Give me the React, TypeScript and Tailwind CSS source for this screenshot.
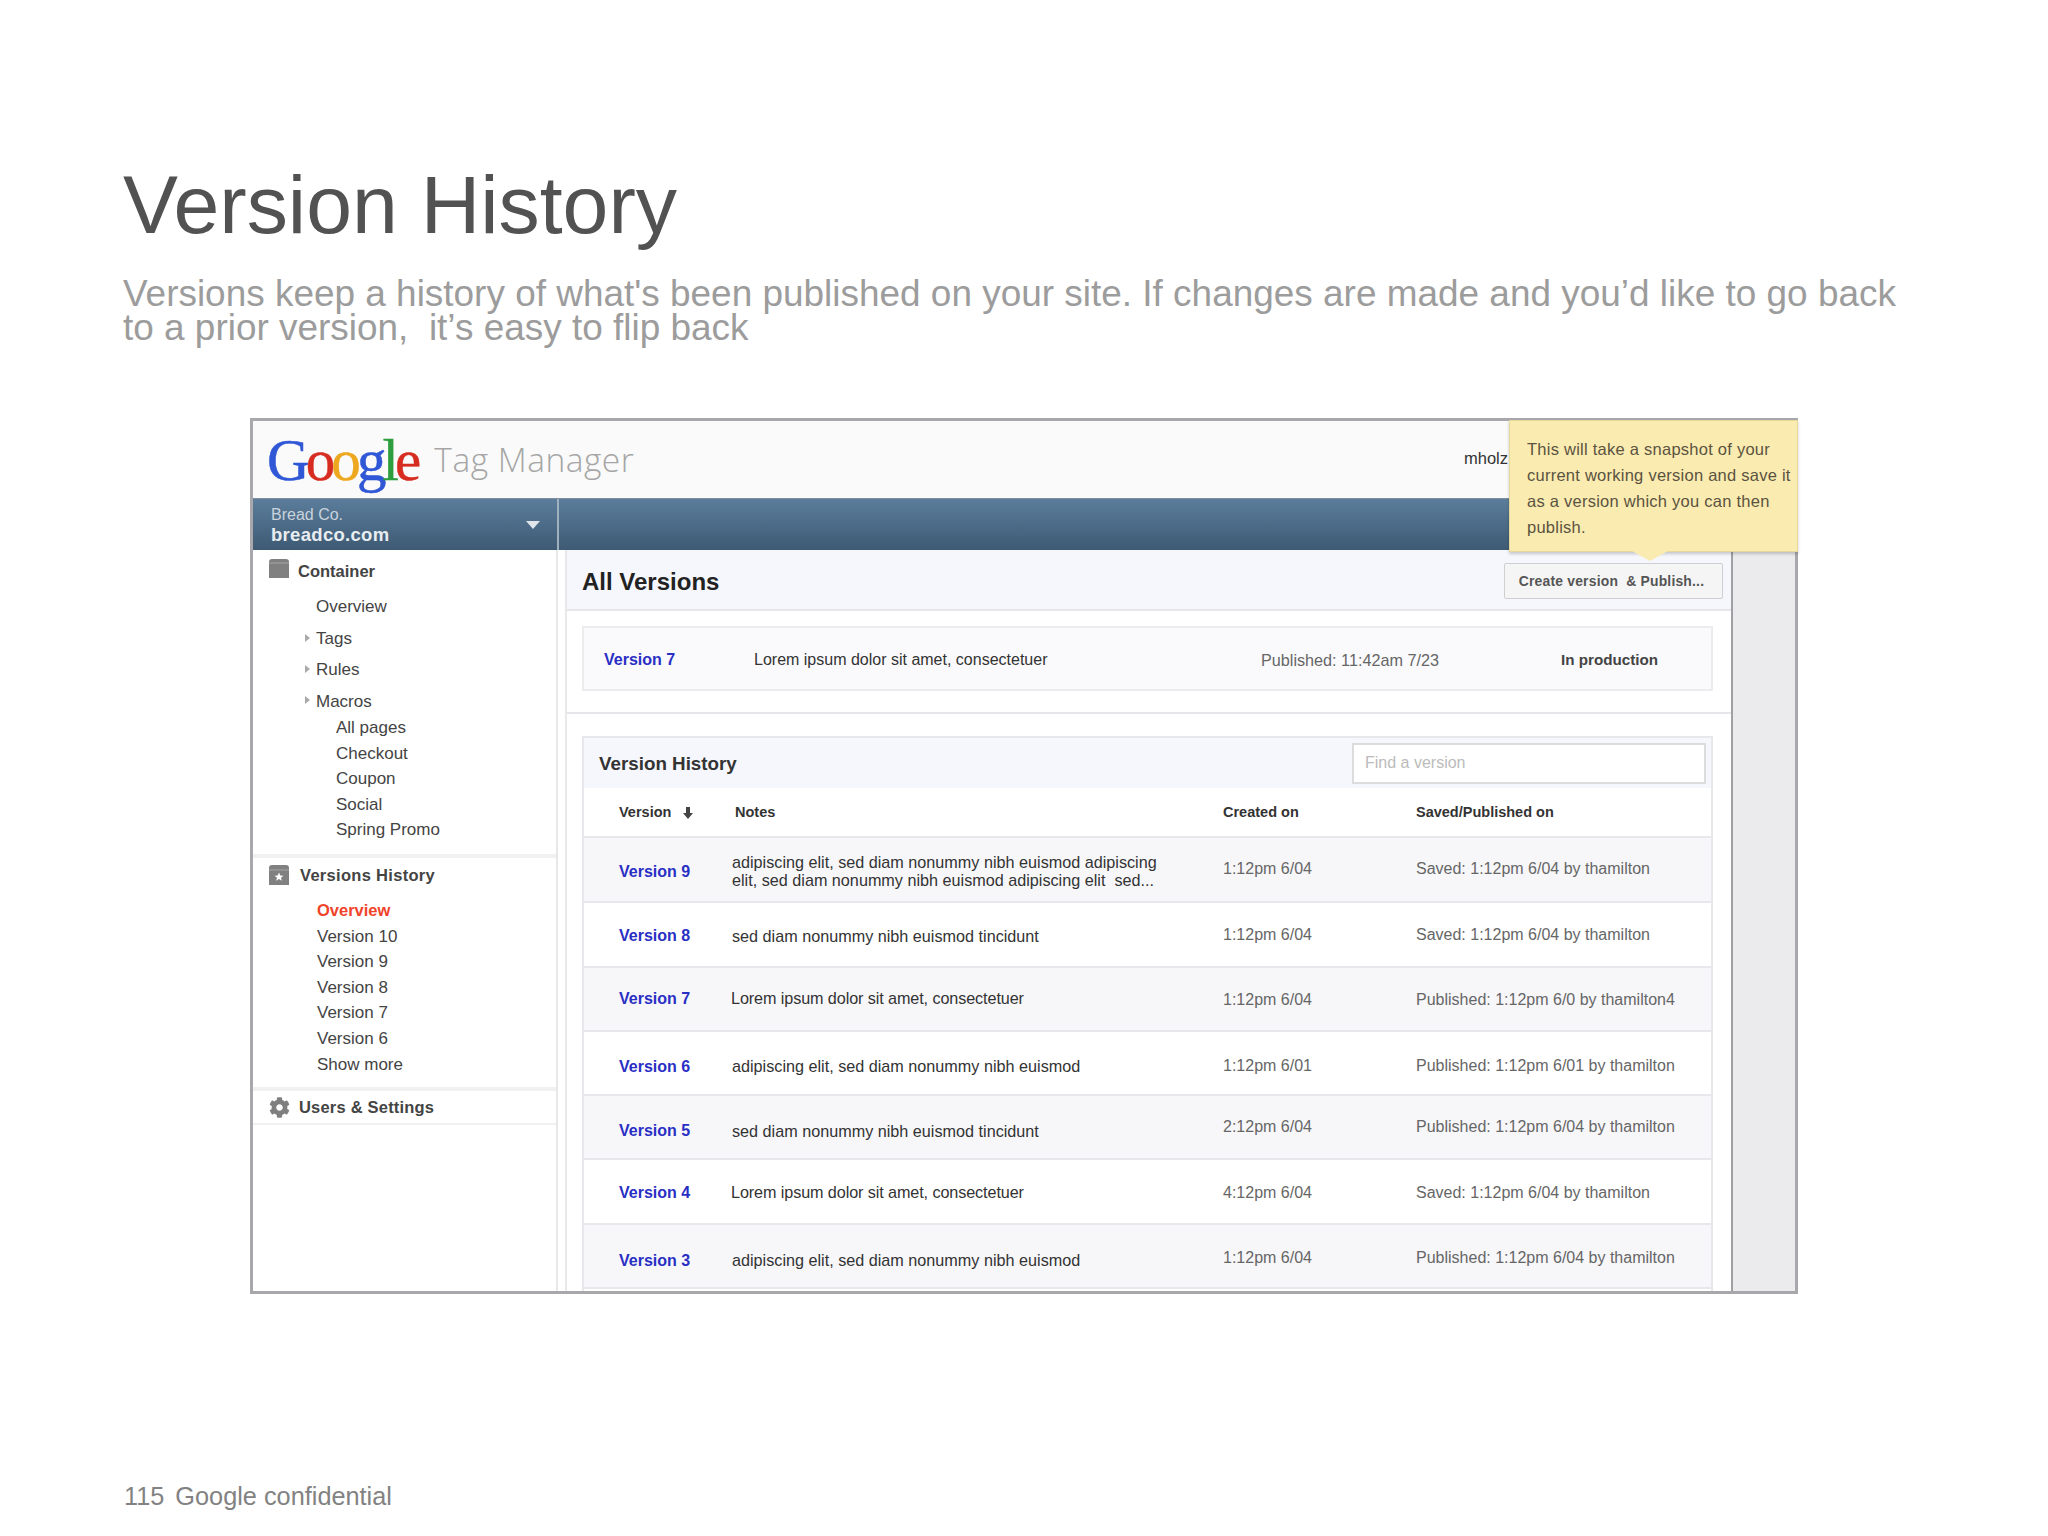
import React from "react";
import { FaCog } from "react-icons/fa";

const rows = [
  { v: "Version 9", n: ["adipiscing elit, sed diam nonummy nibh euismod adipiscing", "elit, sed diam nonummy nibh euismod adipiscing elit  sed..."], c: "1:12pm 6/04", s: "Saved: 1:12pm 6/04 by thamilton", tv: "pt-[5px]", tn: "pt-[3px]", td: "pb-[1px]", lm: "", h: "h-[65.3px]" },
  { v: "Version 8", n: ["sed diam nonummy nibh euismod tincidunt"], c: "1:12pm 6/04", s: "Saved: 1:12pm 6/04 by thamilton", tv: "pt-[4px]", tn: "pt-[3px]", td: "pt-[2px]", lm: "", h: "h-[64.3px]" },
  { v: "Version 7", n: ["Lorem ipsum dolor sit amet, consectetuer"], c: "1:12pm 6/04", s: "Published: 1:12pm 6/0 by thamilton4", tv: "pt-0", tn: "pt-0", td: "pt-[2px]", lm: "ml-[-1px] tracking-[-0.1px]", h: "h-[64.3px]" },
  { v: "Version 6", n: ["adipiscing elit, sed diam nonummy nibh euismod"], c: "1:12pm 6/01", s: "Published: 1:12pm 6/01 by thamilton", tv: "pt-[8px]", tn: "pt-[7px]", td: "pt-[5px]", lm: "", h: "h-[64.3px]" },
  { v: "Version 5", n: ["sed diam nonummy nibh euismod tincidunt"], c: "2:12pm 6/04", s: "Published: 1:12pm 6/04 by thamilton", tv: "pt-[8px]", tn: "pt-[7px]", td: "pt-0", lm: "", h: "h-[64.3px]" },
  { v: "Version 4", n: ["Lorem ipsum dolor sit amet, consectetuer"], c: "4:12pm 6/04", s: "Saved: 1:12pm 6/04 by thamilton", tv: "pt-[2px]", tn: "pt-[2px]", td: "pt-[2px]", lm: "ml-[-1px] tracking-[-0.1px]", h: "h-[64.3px]" },
  { v: "Version 3", n: ["adipiscing elit, sed diam nonummy nibh euismod"], c: "1:12pm 6/04", s: "Published: 1:12pm 6/04 by thamilton", tv: "pt-[10px]", tn: "pt-[9px]", td: "pt-[5px]", lm: "", h: "h-[64.3px]" },
];

function Tri() {
  return <span className="w-0 h-0 border-y-[4px] border-y-transparent border-l-[5px] border-l-[#aaaaaa]" />;
}

export default function App() {
  return (
    <div className="w-[2048px] h-[1536px] bg-white pl-[123px] pt-[158px] font-['Liberation_Sans',Arial,sans-serif] overflow-hidden">
      <h1 className="text-[82.4px] leading-[92px] text-[#525252] font-normal">Version History</h1>
      <p className="mt-[27px] text-[36.95px] leading-[34px] text-[#9c9c9c] w-[1850px] whitespace-pre">
        Versions keep a history of what's been published on your site. If changes are made and you’d like to go back{"\n"}
        to a prior version,  it’s easy to flip back
      </p>

      {/* Frame */}
      <div className="relative ml-[127px] mt-[73px] w-[1548px] h-[876px] border-[3px] border-[#a8a8ac] bg-white flex flex-col overflow-visible">
        {/* Header */}
        <div className="h-[77px] bg-[#fafafa] flex items-center pl-[14px] shrink-0">
          <div className="font-['Liberation_Serif',serif] text-[59px] leading-[70px] tracking-[-3.9px] font-normal [-webkit-text-stroke:0.5px_currentColor]">
            <span className="text-[#2f57d6]">G</span>
            <span className="text-[#d62d20]">o</span>
            <span className="text-[#eda81f]">o</span>
            <span className="text-[#2f57d6]">g</span>
            <span className="text-[#2f9e3f]">l</span>
            <span className="text-[#d62d20]">e</span>
          </div>
          <div className="ml-[17px] font-['Open_Sans',sans-serif] font-light text-[33.5px] tracking-[0.5px] text-[#a6a6a6]">Tag Manager</div>
          <div className="ml-auto mr-[287px] pb-[2px] text-[16.5px] text-[#333333]">mholz</div>
        </div>
        {/* Blue bar */}
        <div className="h-[52px] shrink-0 flex bg-gradient-to-b from-[#5b7d9b] to-[#3e5a74] border-t border-[#7f8f9f]">
          <div className="w-[306px] border-r-2 border-[#9fb0bf] pl-[18px] pr-[17px] flex items-center justify-between pt-[1px]">
            <div className="flex flex-col">
              <span className="text-[16px] leading-[19px] text-[#c9d3dc]">Bread Co.</span>
              <span className="text-[18.5px] leading-[21px] font-bold text-[#e8edf1] tracking-[0.3px]">breadco.com</span>
            </div>
            <span className="w-0 h-0 border-x-[7px] border-x-transparent border-t-[8px] border-t-[#dfe5ea]" />
          </div>
        </div>
        {/* Body */}
        <div className="flex-1 flex min-h-0">
          {/* Sidebar */}
          <div className="w-[305px] shrink-0 border-r-2 border-[#e8e8ea] text-[#444444] text-[17px] flex flex-col">
            <div className="h-[36px] mt-[3px] flex items-center pl-[16px] gap-[9px] font-bold text-[16.5px]">
              <svg width="20" height="19" viewBox="0 0 20 19" className="mb-[6px]"><path d="M3 0h14a3 3 0 0 1 3 3v16H0V3a3 3 0 0 1 3-3z" fill="#808080" /><path d="M0 4h20" stroke="#a5a5a5" strokeWidth="1" /></svg>
              <span>Container</span>
            </div>
            <div className="h-[31.5px] mt-[2px] flex items-center pl-[63px]">Overview</div>
            <div className="h-[31.5px] flex items-center pl-[63px] relative"><span className="absolute left-[52px] top-[11px] flex"><Tri /></span>Tags</div>
            <div className="h-[31.5px] flex items-center pl-[63px] relative"><span className="absolute left-[52px] top-[11px] flex"><Tri /></span>Rules</div>
            <div className="h-[31.5px] flex items-center pl-[63px] relative"><span className="absolute left-[52px] top-[10px] flex"><Tri /></span>Macros</div>
            <div className="pl-[83px] mt-[-2px]">
              {["All pages", "Checkout", "Coupon", "Social", "Spring Promo"].map((t) => (
                <div key={t} className="h-[25.6px] flex items-center">{t}</div>
              ))}
            </div>
            <div className="mt-[11px] h-[4px] bg-[#f1f1f2] shrink-0" />
            <div className="h-[34px] flex items-center pl-[16px] gap-[11px] font-bold text-[16.5px]">
              <svg width="20" height="20" viewBox="0 0 20 20"><path d="M3 0h14a3 3 0 0 1 3 3v17H0V3a3 3 0 0 1 3-3z" fill="#808080" /><path d="M0 5h20" stroke="#a5a5a5" strokeWidth="1" /><path d="M10 7.5l1.3 2.9 3.1.3-2.4 2 .8 3-2.8-1.6-2.8 1.6.8-3-2.4-2 3.1-.3z" fill="#ffffff" /></svg>
              <span className="tracking-[0.3px]">Versions History</span>
            </div>
            <div className="pl-[64px] mt-[6px]">
              <div className="h-[25.6px] flex items-center text-[#f0432a] font-bold text-[16.5px]">Overview</div>
              {["Version 10", "Version 9", "Version 8", "Version 7", "Version 6", "Show more"].map((t) => (
                <div key={t} className="h-[25.6px] flex items-center">{t}</div>
              ))}
            </div>
            <div className="mt-[10px] h-[4px] bg-[#f1f1f2] shrink-0" />
            <div className="h-[34px] flex items-center pl-[16px] gap-[9px] font-bold text-[16.5px] border-b-2 border-[#f1f1f2] tracking-[0.2px]">
              <FaCog className="w-[21px] h-[21px] text-[#7f7f7f]" />
              <span>Users &amp; Settings</span>
            </div>
          </div>
          <div className="w-[7px] bg-white shrink-0" />
          {/* Main */}
          <div className="w-[1168px] shrink-0 border-r-[2px] border-l-2 border-[#a0a0a4] border-l-[#e8e8ea] bg-white flex flex-col overflow-hidden">
            <div className="h-[61px] shrink-0 bg-[#f6f7fc] border-b-2 border-[#e6e6ea] flex items-center justify-between pl-[15px] pr-[8px] pt-[4px]">
              <span className="text-[24px] font-bold text-[#222222]">All Versions</span>
              <div className="w-[219px] h-[36px] mt-[-1px] rounded-[2px] border border-[#cfcfd3] bg-[#f5f5f6] flex items-center justify-center text-[13.9px] font-bold text-[#555555] tracking-[0.2px] whitespace-pre pr-[4px]">Create version  &amp; Publish...</div>
            </div>
            <div className="mt-[15px] mx-[15px] h-[65px] shrink-0 border-2 border-[#ececef] bg-[#fafafc] flex items-center text-[16px] pl-[20px] pt-[3px] w-[1131px]">
              <span className="w-[150px] font-bold text-[#2a2fc4]">Version 7</span>
              <span className="w-[507px] text-[#333333]">Lorem ipsum dolor sit amet, consectetuer</span>
              <span className="w-[300px] text-[#666666] text-[16.2px]">Published: 11:42am 7/23</span>
              <span className="font-bold text-[#444444] text-[15.2px]">In production</span>
            </div>
            <div className="mt-[21px] h-[2px] shrink-0 bg-[#e6e6ea]" />
            <div className="mt-[22px] mx-[15px] w-[1131px] border-x-2 border-t-2 border-[#e8e8ec] flex flex-col">
              <div className="h-[50px] shrink-0 bg-[#f6f7fc] flex items-center justify-between pl-[15px] pr-[5px]">
                <span className="text-[18.8px] font-bold text-[#333333] pt-[3px]">Version History</span>
                <div className="w-[354px] h-[41px] bg-white border-2 border-[#dcdcdf] flex items-center pl-[11px] text-[16px] text-[#bbbbbb]">Find a version</div>
              </div>
              <div className="h-[50px] shrink-0 pt-[1px] bg-white grid grid-cols-[148px_491px_193px_1fr] items-center text-[14.5px] font-bold text-[#333333] border-b-2 border-[#e8e8ec]">
                <div className="pl-[35px] flex items-center">
                  Version
                  <svg className="ml-[12px]" width="10" height="12" viewBox="0 0 10 12"><path d="M3 0h4v6h3l-5 6-5-6h3z" fill="#444444" /></svg>
                </div>
                <div className="pl-[3px]">Notes</div>
                <div>Created on</div>
                <div>Saved/Published on</div>
              </div>
              {rows.map((r, i) => (
                <div key={r.v} className={r.h + " shrink-0 grid grid-cols-[148px_491px_193px_1fr] items-center text-[16px] border-b-2 border-[#e8e8ec] " + (i % 2 === 0 ? "bg-[#f7f7fa]" : "bg-white")}>
                  <div className={r.tv + " pl-[35px] font-bold text-[#2a2fc4]"}>{r.v}</div>
                  <div className={r.tn + " " + r.lm + " leading-[18.5px] text-[16.2px] text-[#333333] whitespace-pre"}>
                    {r.n.map((l) => <div key={l}>{l}</div>)}
                  </div>
                  <div className={r.td + " text-[#666666]"}>{r.c}</div>
                  <div className={r.td + " text-[#666666]"}>{r.s}</div>
                </div>
              ))}
              <div className="h-[20px] bg-white" />
            </div>
          </div>
          <div className="flex-1 bg-[#ebebee]" />
        </div>

        {/* Tooltip */}
        <div className="absolute right-[-3px] top-[-1px] w-[289px] h-[132px] bg-[#faebb0] border border-[#e6d89a] shadow-[0_2px_3px_rgba(0,0,0,0.2)] pl-[17px] pt-[15px] text-[16.5px] leading-[26px] text-[#5b5341] whitespace-nowrap tracking-[0.25px]">
          <div>This will take a snapshot of your</div>
          <div>current working version and save it</div>
          <div>as a version which you can then</div>
          <div>publish.</div>
          <span className="absolute left-[122px] bottom-[-10px] w-0 h-0 border-x-[18px] border-x-transparent border-t-[10px] border-t-[#faebb0]" />
        </div>
      </div>

      <div className="mt-[187px] pl-[1px] text-[25.3px] leading-[30px] text-[#828282] flex">
        <span>115</span>
        <span className="ml-[11px]">Google confidential</span>
      </div>
    </div>
  );
}
